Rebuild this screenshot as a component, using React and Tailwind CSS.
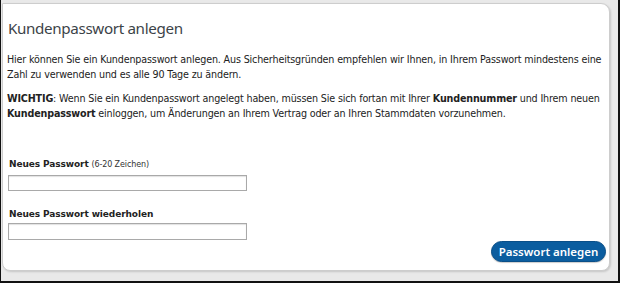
export default function App() {
  const font = { fontFamily: '"DejaVu Sans", Verdana, sans-serif' };
  return (
    <div
      className="w-[620px] h-[283px] bg-[#e9e9e9] border-l border-r-2 border-b-2 border-[#111] pt-[3px] pl-[1px] pr-[8px] pb-[10px] flex"
      style={font}
    >
      <div className="flex-1 bg-white border border-[#cdcdcd] rounded-tr-[9px] rounded-br-[8px] rounded-bl-[8px] shadow-[1px_1px_2px_rgba(0,0,0,0.15)] flex flex-col pl-[4px] pr-[2px]">
        <h1 className="mt-[14px] ml-[1px] text-[15.2px] leading-[20px] text-[#3c4348] tracking-[-0.35px] font-['Noto_Sans',sans-serif]">
          Kundenpasswort anlegen
        </h1>
        <p className="mt-[14px] text-[9.6px] leading-[15px] text-[#222] tracking-[-0.16px]">
          Hier können Sie ein Kundenpasswort anlegen. Aus Sicherheitsgründen empfehlen wir Ihnen, in Ihrem Passwort mindestens eine Zahl zu verwenden und es alle 90 Tage zu ändern.
        </p>
        <p className="mt-[9px] text-[9.6px] leading-[15px] text-[#222] tracking-[-0.16px]">
          <span className="font-bold">WICHTIG</span>: Wenn Sie ein Kundenpasswort angelegt haben, müssen Sie sich fortan mit Ihrer{" "}
          <span className="font-bold">Kundennummer</span> und Ihrem neuen{" "}
          <span className="font-bold">Kundenpasswort</span> einloggen, um Änderungen an Ihrem Vertrag oder an Ihren Stammdaten vorzunehmen.
        </p>
        <div className="flex items-end justify-between mt-[37px]">
          <div className="flex flex-col">
            <label className="text-[9px] leading-[12px] text-[#222] ml-[2px] tracking-[-0.1px]">
              <span className="font-bold">Neues Passwort</span>{" "}
              <span className="text-[8px] text-[#333]">(6-20 Zeichen)</span>
            </label>
            <input
              type="password"
              className="mt-[4px] ml-[1px] w-[239px] h-[16px] border border-[#a9a9a9] bg-white shadow-[inset_0_1px_1px_rgba(0,0,0,0.12)] outline-none"
            />
            <label className="mt-[17px] text-[9px] leading-[12px] text-[#222] font-bold ml-[2px] tracking-[-0.1px]">
              Neues Passwort wiederholen
            </label>
            <input
              type="password"
              className="mt-[3px] ml-[1px] w-[239px] h-[17px] border border-[#a9a9a9] bg-white shadow-[inset_0_1px_1px_rgba(0,0,0,0.12)] outline-none"
            />
          </div>
          <button className="mb-[-22px] mr-[1px] h-[21px] w-[115px] rounded-full bg-[#0b5d9f] text-white text-[11.5px] font-semibold leading-[19px] border border-[#0a4f88] shadow-[0_1px_1px_rgba(0,0,0,0.2)] whitespace-nowrap font-['Noto_Sans',sans-serif]">
            Passwort anlegen
          </button>
        </div>
      </div>
    </div>
  );
}
